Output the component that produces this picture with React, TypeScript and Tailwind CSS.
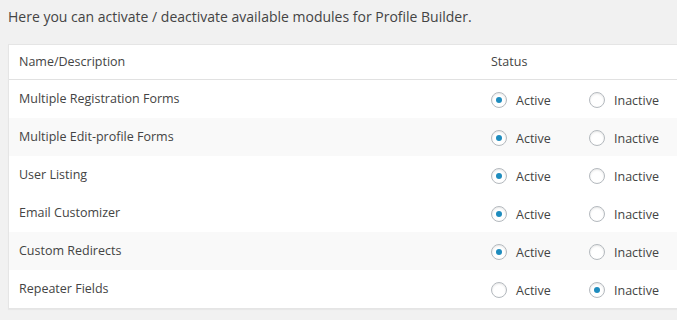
import React from 'react';

type Module = { name: string; active: boolean; shaded?: boolean };

const modules: Module[] = [
    { name: 'Multiple Registration Forms', active: true },
    { name: 'Multiple Edit-profile Forms', active: true, shaded: true },
    { name: 'User Listing', active: true },
    { name: 'Email Customizer', active: true },
    { name: 'Custom Redirects', active: true, shaded: true },
    { name: 'Repeater Fields', active: false },
];

const Radio: React.FC<{ checked: boolean }> = ({ checked }) => (
    <span className="w-4 h-4 rounded-full border border-[#b4b9be] bg-white shadow-[inset_0_1px_2px_rgba(0,0,0,0.1)] flex items-center justify-center shrink-0">
        {checked && <span className="w-[6px] h-[6px] rounded-full bg-[#1e8cbe]" />}
    </span>
);

const App: React.FC = () => {
    return (
        <div className="w-[677px] h-[320px] overflow-hidden bg-[#f1f1f1] text-[#444] font-['Open_Sans',sans-serif]">
            <p className="pl-2 pt-[7px] text-[14px] leading-5 h-[44px]">
                Here you can activate / deactivate available modules for Profile Builder.
            </p>
            <div className="ml-2 w-[700px] bg-white border border-[#e5e5e5] shadow-[0_1px_1px_rgba(0,0,0,0.04)] text-[12.5px]">
                <div className="flex items-center h-[35px] border-b border-[#e1e1e1]">
                    <div className="w-[471px] pl-[10px]">Name/Description</div>
                    <div className="pl-[11px]">Status</div>
                </div>
                {modules.map(m => (
                    <div key={m.name} className={`flex items-center h-[38px] ${m.shaded ? 'bg-[#f9f9f9]' : 'bg-white'}`}>
                        <div className="w-[471px] pl-[10px]">{m.name}</div>
                        <div className="flex items-center pl-[11px]">
                            <label className="flex items-center gap-[9px] w-[98px] pt-[2px]">
                                <Radio checked={m.active} />
                                <span className="pt-[2px]">Active</span>
                            </label>
                            <label className="flex items-center gap-[9px] pt-[2px]">
                                <Radio checked={!m.active} />
                                <span className="pt-[2px]">Inactive</span>
                            </label>
                        </div>
                    </div>
                ))}
            </div>
        </div>
    );
};

export default App;
